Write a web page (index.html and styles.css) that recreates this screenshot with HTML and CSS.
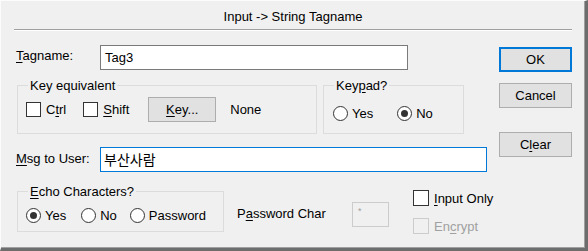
FILE: index.html
```html
<!DOCTYPE html>
<html lang="en">
<head>
    <meta charset="UTF-8">
    <title>Input -> String Tagname</title>
    <link rel="stylesheet" href="styles.css">
</head>
<body>

    <div class="dialog">
        <div class="title">Input -&gt; String Tagname</div>
        <div class="sep"></div>

        <div class="content">
            <!-- left side: fields -->
            <div class="main">
                <div class="field-row tag-row">
                    <span class="field-label"><u>T</u>agname:</span>
                    <div class="textbox tag-box">Tag3</div>
                </div>

                <div class="group-row">
                    <fieldset class="group key-group">
                        <legend>Key equivalent</legend>
                        <div class="group-body">
                            <span class="check"><span class="box"></span>C<u>t</u>rl</span>
                            <span class="check shift"><span class="box"></span><u>S</u>hift</span>
                            <span class="btn key-btn"><u>K</u>ey...</span>
                            <span class="key-value">None</span>
                        </div>
                    </fieldset>
                    <fieldset class="group keypad-group">
                        <legend>Key<u>p</u>ad?</legend>
                        <div class="group-body">
                            <span class="radio"><span class="dot"></span>Yes</span>
                            <span class="radio on keypad-no"><span class="dot"></span>No</span>
                        </div>
                    </fieldset>
                </div>

                <div class="field-row msg-row">
                    <span class="field-label"><u>M</u>sg to User:</span>
                    <div class="textbox msg-box focused">부산사람</div>
                </div>

                <div class="bottom-row">
                    <fieldset class="group echo-group">
                        <legend><u>E</u>cho Characters?</legend>
                        <div class="group-body">
                            <span class="radio on"><span class="dot"></span>Yes</span>
                            <span class="radio echo-no"><span class="dot"></span>No</span>
                            <span class="radio echo-pw"><span class="dot"></span>Password</span>
                        </div>
                    </fieldset>
                    <span class="pw-label">P<u>a</u>ssword Char</span>
                    <div class="pw-box">*</div>
                    <div class="options">
                        <span class="check"><span class="box"></span><u>I</u>nput Only</span>
                        <span class="check disabled"><span class="box"></span>En<u>c</u>rypt</span>
                    </div>
                </div>
            </div>

            <!-- right side: buttons -->
            <div class="side">
                <span class="btn side-btn default">OK</span>
                <span class="btn side-btn cancel">Cancel</span>
                <span class="btn side-btn clear">C<u>l</u>ear</span>
            </div>
        </div>
    </div>

</body>
</html>
```

FILE: styles.css
```css
body {
    margin: 0;
    padding: 0;
    background-color: #f0f0f0;
    font-family: "Liberation Sans", Arial, "Noto Sans CJK KR", sans-serif;
    font-size: 13px;
    line-height: 15px;
    color: #000;
    overflow: hidden;
}

u {
    text-decoration: underline;
    text-underline-offset: 2px;
}

.dialog {
    width: 588px;
    height: 251px;
    box-sizing: border-box;
    background-color: #f0f0f0;
    border-left: 1px solid #fcfcfc;
    border-top: 1px solid #fcfcfc;
    border-right: 3px solid #6d6d6d;
    border-bottom: 3px solid #6d6d6d;
    box-shadow: inset -1px -1px 0 #a0a0a0;
}

.title {
    text-align: center;
    padding: 8px 0 5px;
}

.sep {
    margin: 0 13px;
    border-top: 1px solid #a0a0a0;
    border-bottom: 1px solid #fff;
}

.content {
    display: flex;
    padding-left: 15px;
}

.main {
    width: 471px;
    flex-shrink: 0;
}

/* text fields */
.field-row {
    display: flex;
}

.tag-row {
    margin-top: 14px;
}

.msg-row {
    margin-top: 13px;
}

.field-label {
    width: 84px;
    flex-shrink: 0;
    padding-top: 3px;
}

.msg-row .field-label {
    padding-top: 4px;
}

.textbox {
    box-sizing: border-box;
    height: 25px;
    padding: 4px 4px;
    background-color: #fff;
    border: 1px solid #7a7a7a;
}

.tag-box {
    width: 308px;
}

.msg-box {
    width: 387px;
    padding-left: 3px;
    font-family: "Noto Sans CJK KR", sans-serif;
    font-size: 14px;
    line-height: 15px;
}

.textbox.focused {
    border-color: #0078d7;
}

/* group boxes */
fieldset.group {
    margin: 0;
    padding: 0;
    min-width: 0;
    flex-shrink: 0;
    border: 1px solid #dcdcdc;
    box-sizing: border-box;
}

fieldset.group legend {
    margin-left: 10px;
    padding: 0 2px;
    line-height: 15px;
}

.group-row {
    display: flex;
    margin-top: 8px;
}

.group-body {
    display: flex;
    align-items: center;
    height: 25px;
}

.key-group {
    width: 300px;
    margin-left: 1px !important;
}

.key-group .group-body {
    padding: 4px 0 11px 8px;
}

.keypad-group {
    width: 141px;
    margin-left: 6px !important;
}

.keypad-group .group-body {
    padding: 8px 0 7px 9px;
}

/* checkboxes and radios */
.check,
.radio {
    display: flex;
    align-items: center;
    white-space: nowrap;
    flex-shrink: 0;
}

.check .box {
    width: 13px;
    height: 13px;
    margin-right: 5px;
    background-color: #fff;
    border: 1px solid #333;
}

.check.disabled {
    color: #a0a0a0;
}

.check.disabled .box {
    border-color: #cccccc;
    background-color: #f0f0f0;
}

.radio .dot {
    position: relative;
    width: 13px;
    height: 13px;
    margin-right: 4px;
    border: 1px solid #333;
    border-radius: 50%;
    background-color: #fff;
}

.radio.on .dot::after {
    content: "";
    position: absolute;
    left: 3px;
    top: 3px;
    width: 7px;
    height: 7px;
    border-radius: 50%;
    background-color: #333;
}

.shift {
    margin-left: 17px;
}

.key-value {
    margin-left: 14px;
}

.keypad-no {
    margin-left: 24px;
}

/* buttons */
.btn {
    display: flex;
    align-items: center;
    justify-content: center;
    box-sizing: border-box;
    height: 25px;
    flex-shrink: 0;
    background-color: #e1e1e1;
    border: 1px solid #adadad;
}

.key-btn {
    width: 68px;
    margin-left: 19px;
}

.side {
    display: flex;
    flex-direction: column;
    margin-left: 12px;
    width: 73px;
}

.side-btn {
    width: 73px;
}

.side-btn.default {
    margin-top: 16px;
    border-color: #0078d7;
    box-shadow: inset 0 0 0 1px #0078d7;
}

.side-btn.cancel {
    margin-top: 11px;
}

.side-btn.clear {
    margin-top: 24px;
}

/* bottom row */
.bottom-row {
    display: flex;
    align-items: flex-start;
    margin-top: 12px;
}

.echo-group {
    width: 207px;
    margin-left: 1px !important;
}

.echo-group .group-body {
    padding: 4px 0 3px 8px;
}

.echo-no {
    margin-left: 15px;
}

.echo-pw {
    margin-left: 13px;
}

.pw-label {
    width: 115px;
    flex-shrink: 0;
    margin-left: 13px;
    margin-top: 22px;
}

.pw-box {
    box-sizing: border-box;
    width: 37px;
    height: 25px;
    flex-shrink: 0;
    margin-top: 18px;
    padding: 4px 0 0 5px;
    font-size: 9px;
    line-height: 9px;
    color: #a0a0a0;
    background-color: #f0f0f0;
    border: 1px solid #cccccc;
}

.options {
    display: flex;
    flex-direction: column;
    gap: 12px;
    margin-left: 24px;
    margin-top: 6px;
}

.options .check {
    height: 16px;
}

.options .box {
    width: 14px;
    height: 14px;
    margin-right: 5px;
}
```
